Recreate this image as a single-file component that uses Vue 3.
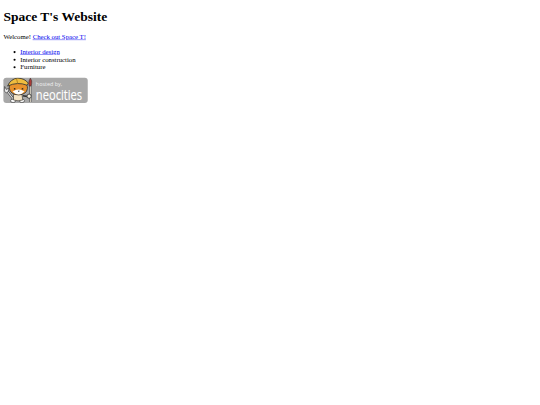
<template>
  <div class="page">
    <h1>Space T's Website</h1>
    <p>Welcome! <a href="#">Check out Space T!</a></p>
    <ul>
      <li><a href="#">Interior design</a></li>
      <li>Interior construction</li>
      <li>Furniture</li>
    </ul>
    <a href="#" class="badge">
      <svg class="cat" viewBox="0 0 76 60" width="76" height="60">
        <!-- wrench -->
        <path d="M7 29l16 21" fill="none" stroke="#333" stroke-width="5" />
        <path d="M7 29l16 21" fill="none" stroke="#e8e8e8" stroke-width="2.500" />
        <path d="M2 32l1-11 4 7 6-3-1 8-5 3z" fill="#e8e8e8" stroke="#333" stroke-width="1.500" />
        <!-- legs and body -->
        <ellipse cx="23" cy="55" rx="6" ry="4" fill="#fff" stroke="#333" stroke-width="1.500" />
        <ellipse cx="44" cy="55" rx="6" ry="4" fill="#fff" stroke="#333" stroke-width="1.500" />
        <path d="M24 40q10-4 20 0l2 13q-11 4-22 0z" fill="#f4e3c4" stroke="#333" stroke-width="1.500" />
        <path d="M46 43l13 2" stroke="#333" stroke-width="4" />
        <!-- head -->
        <path d="M14 25q-1-12 9-15l26 1q9 5 8 15-2 14-21 15-20-1-22-16z" fill="#e8922c" stroke="#333" stroke-width="2" />
        <path d="M22 33q14-10 28 0-6 7-14 7t-14-7z" fill="#fff" />
        <path d="M25 24l5 3-5 2zM47 24l-5 3 5 2z" fill="#222" />
        <path d="M34 31h5l-2.500 3z" fill="#222" />
        <!-- hard hat -->
        <path d="M10 20q7-17 24-19 17 1 25 12l-3 5q-22-9-46 2z" fill="#efbd3f" stroke="#333" stroke-width="2" />
        <path d="M31 2l3 12" stroke="#a87a1c" stroke-width="2" />
        <!-- paintbrush -->
        <path d="M64 20v38" stroke="#333" stroke-width="4.500" />
        <path d="M64 20v38" stroke="#efe7d6" stroke-width="2.200" />
        <path d="M64 1q5 7 3 13l-1 6h-5l-1-6q0-7 4-13z" fill="#a93a36" stroke="#333" stroke-width="1.200" />
        <circle cx="61" cy="44" r="5" fill="#f6efe0" stroke="#333" stroke-width="2" />
      </svg>
      <span class="badge-text">
        <span class="hosted">hosted by,</span>
        <span class="neo">neocities</span>
      </span>
    </a>
  </div>
</template>

<script setup>
</script>

<style>
body { background: #fff; }
</style>

<style scoped>
/* the reference is a 1280px wide page shrunk down to 540px */
.page { width: 1264px; padding: 21.44px 8px 0; transform: scale(0.421875); transform-origin: 0 0; font-family: "Liberation Serif", serif; font-size: 16px; color: #000; }
h1 { font-size: 32px; font-weight: bold; margin: 0 0 20.44px; }
p { margin: 0 0 17px; }
a { color: #00e; }
ul { margin: 0 0 16px; padding-left: 40px; }
.badge { display: flex; width: 200px; height: 60px; background: #a8a8a8; border-radius: 7px; text-decoration: none; }
.cat { flex: none; }
.badge-text { display: flex; flex-direction: column; font-family: "Open Sans", sans-serif; color: #fff; padding: 7px 0 0 1px; }
.hosted { font-size: 14px; line-height: 17px; color: #f0f0f0; transform: scaleX(0.92); transform-origin: 0 0; }
.neo { font-size: 33px; line-height: 32px; color: #fff; -webkit-text-stroke: 0.3px #fff; transform: scaleX(0.8); transform-origin: 0 0; }
</style>
